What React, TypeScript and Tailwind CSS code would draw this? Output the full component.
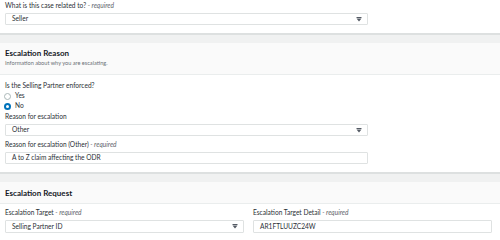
import { ReactNode } from 'react';

const font = { fontFamily: 'Lato, "Liberation Sans", sans-serif' };

const Label = ({ text, required }: { text: string; required?: boolean }) => (
  <p className="text-[6.6px] leading-[9px] text-[#2b2f35]">
    {text}
    {required && <span className="italic text-[#5f666d]"> - required</span>}
  </p>
);

const Select = ({ value, className = '' }: { value: string; className?: string }) => (
  <div
    className={`mt-[3px] flex h-[12px] items-center justify-between rounded-[1px] border border-[#dfe2e2] bg-white pl-[6px] pr-[5px] ${className}`}
  >
    <span className="text-[6.6px] text-[#2b2f35]">{value}</span>
    <svg width="6" height="5" viewBox="0 0 6 5">
      <rect x="0.5" y="0" width="5" height="1" fill="#545b64" />
      <path d="M0.5 1.5 H5.5 L3 4.5 Z" fill="#545b64" />
    </svg>
  </div>
);

const Input = ({ value, className = '' }: { value: string; className?: string }) => (
  <div
    className={`mt-[3px] flex h-[12px] items-center rounded-[1px] border border-[#dfe2e2] bg-white pl-[6px] ${className}`}
  >
    <span className="text-[6.6px] text-[#2b2f35]">{value}</span>
  </div>
);

const Radio = ({ label, checked }: { label: string; checked?: boolean }) => (
  <div className="-ml-[1px] flex h-[10px] items-center gap-[4px]">
    {checked ? (
      <span className="flex h-[7px] w-[7px] items-center justify-center rounded-full bg-[#0073bb]">
        <span className="h-[3px] w-[3px] rounded-full bg-white" />
      </span>
    ) : (
      <span className="h-[7px] w-[7px] rounded-full border border-[#aab7b8] bg-white" />
    )}
    <span className="text-[6.6px] text-[#2b2f35]">{label}</span>
  </div>
);

const SectionHeader = ({ title, sub }: { title: string; sub?: string }) => (
  <div>
    <div className="h-[2px] bg-[#dde0e0]" />
    <div className="h-[8px] bg-[#f0f1f1]" />
    {sub ? (
      <div className="h-[32px] border-b border-[#eaeded] bg-[#fafafa] px-[5px] pt-[5px]">
        <p className="text-[8px] font-bold leading-[10px] text-[#16191f]">{title}</p>
        <p className="mt-[0.5px] text-[5.6px] leading-[7px] text-[#6b7178]">{sub}</p>
      </div>
    ) : (
      <div className="flex h-[22px] items-center border-b border-[#eaeded] bg-[#fafafa] px-[5px]">
        <p className="text-[8px] font-bold leading-[10px] text-[#16191f]">{title}</p>
      </div>
    )}
  </div>
);

const Block = ({ children, className = '' }: { children: ReactNode; className?: string }) => (
  <div className={`px-[5px] ${className}`}>{children}</div>
);

export default function App() {
  return (
    <div className="h-[240px] w-[500px] overflow-hidden bg-white" style={font}>
      <Block className="pt-[1px] pb-[8px]">
        <Label text="What is this case related to?" required />
        <Select value="Seller" className="w-[363px]" />
      </Block>

      <SectionHeader title="Escalation Reason" sub="Information about why you are escalating." />

      <Block className="pt-[6px] pb-[8px]">
        <Label text="Is the Selling Partner enforced?" />
        <div className="mt-[1px]">
          <Radio label="Yes" />
          <Radio label="No" checked />
        </div>
        <div className="mt-[1px]">
          <Label text="Reason for escalation" />
          <Select value="Other" className="w-[363px]" />
        </div>
        <div className="mt-[4px]">
          <Label text="Reason for escalation (Other)" required />
          <Input value="A to Z claim affecting the ODR" className="w-[363px]" />
        </div>
      </Block>

      <SectionHeader title="Escalation Request" />

      <Block className="pt-[4px] pr-[8px]">
        <div className="grid grid-cols-2 gap-[9px]">
          <div>
            <Label text="Escalation Target" required />
            <Select value="Selling Partner ID" className="h-[13px]" />
          </div>
          <div>
            <Label text="Escalation Target Detail" required />
            <Input value="AR1FTLUUZC24W" className="h-[13px]" />
          </div>
        </div>
      </Block>
    </div>
  );
}
